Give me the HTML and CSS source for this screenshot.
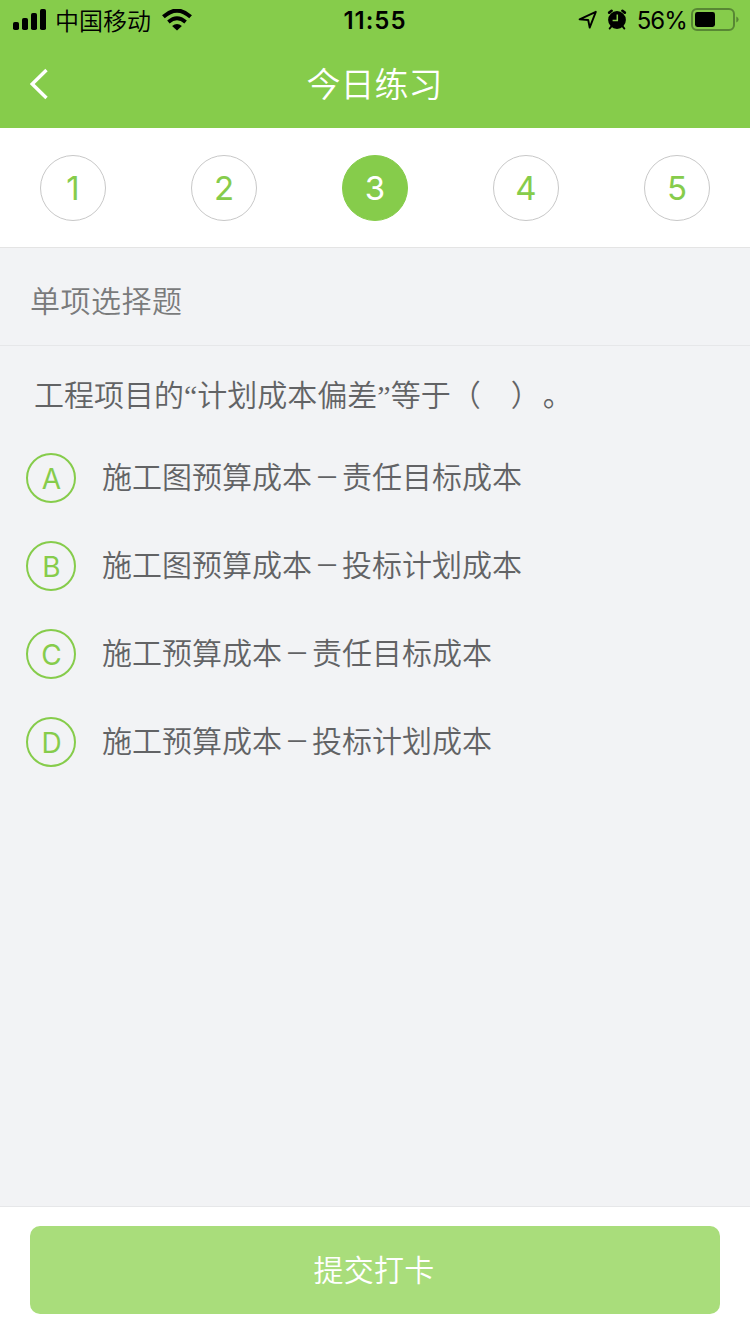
FILE: index.html
```html
<!DOCTYPE html>
<html lang="zh-CN">
<head>
<meta charset="utf-8">
<title>今日练习</title>
<link rel="stylesheet" href="styles.css">
</head>
<body>
<div class="app">
  <header class="header">
    <div class="status">
      <div class="status-left">
        <svg class="signal" width="34" height="22" viewBox="0 0 34 22">
          <rect x="0" y="13" width="6" height="8" rx="1.8"/>
          <rect x="9" y="9" width="6" height="12" rx="1.8"/>
          <rect x="18" y="4" width="6" height="17" rx="1.8"/>
          <rect x="27" y="0" width="6" height="21" rx="1.8"/>
        </svg>
        <span class="carrier">中国移动</span>
        <svg class="wifi" width="30" height="22" viewBox="0 0 30 22">
          <path d="M1.4 7.8Q15 -4.6 28.6 7.8" fill="none" stroke="#000" stroke-width="4"/>
          <path d="M6.4 13Q15 5.4 23.6 13" fill="none" stroke="#000" stroke-width="3.7"/>
          <path d="M10.1 17Q15 13 19.9 17L15 21.6Z"/>
        </svg>
      </div>
      <span class="time">11:55</span>
      <div class="status-right">
        <svg class="locate" width="20" height="20" viewBox="0 0 20 20">
          <path d="M1.6 9.4L17.8 1.8L11.7 17.6L10.2 10Z" fill="none" stroke="#000" stroke-width="1.9" stroke-linejoin="round"/>
        </svg>
        <svg class="alarm" width="20" height="22" viewBox="0 0 20 22">
          <circle cx="10" cy="11" r="8.9"/>
          <path d="M2.2 3.6L4.6 1.8M17.8 3.6L15.4 1.8" stroke="#000" stroke-width="2.6" stroke-linecap="round"/>
          <path d="M4.4 17.4L2.6 19.6M15.6 17.4L17.4 19.6" stroke="#000" stroke-width="1.8" stroke-linecap="round"/>
          <path d="M10.3 5.6V11.6H5.6" fill="none" stroke="#86cc4b" stroke-width="1.5"/>
        </svg>
        <span class="percent">56%</span>
        <svg class="battery" width="48" height="24" viewBox="0 0 48 24">
          <rect x="1" y="1" width="42" height="21" rx="5" fill="none" stroke="#588734" stroke-width="2"/>
          <rect x="4" y="4" width="20" height="15" rx="2.4"/>
          <path d="M45.3 8.5Q47.6 9.4 47.6 11.5T45.3 14.5Z" fill="#588734"/>
        </svg>
      </div>
    </div>
    <nav class="navbar">
      <svg class="back" width="20" height="32" viewBox="0 0 20 32">
        <path d="M16.5 2L2.2 16L16.5 30" fill="none" stroke="#fff" stroke-width="3.4"/>
      </svg>
      <h1 class="title">今日练习</h1>
    </nav>
  </header>
  <div class="steps">
    <span class="step">1</span>
    <span class="step">2</span>
    <span class="step step-active">3</span>
    <span class="step">4</span>
    <span class="step">5</span>
  </div>
  <div class="kind">单项选择题</div>
  <main class="quiz">
    <p class="question">工程项目的<span class="quote">“</span>计划成本偏差<span class="quote">”</span>等于（&#12288;<span class="paren">）</span>。</p>
    <ul class="options">
      <li class="option"><span class="letter">A</span><span>施工图预算成本<span class="minus">－</span>责任目标成本</span></li>
      <li class="option"><span class="letter">B</span><span>施工图预算成本<span class="minus">－</span>投标计划成本</span></li>
      <li class="option"><span class="letter">C</span><span>施工预算成本<span class="minus">－</span>责任目标成本</span></li>
      <li class="option"><span class="letter">D</span><span>施工预算成本<span class="minus">－</span>投标计划成本</span></li>
    </ul>
  </main>
  <footer class="footer">
    <button class="submit">提交打卡</button>
  </footer>
</div>
</body>
</html>
```
FILE: styles.css
```css
* { box-sizing: border-box; }
body {
  margin: 0;
  background: #f2f3f5;
  font-family: "Noto Sans CJK SC", "Noto Sans CJK SC DemiLight", sans-serif;
  font-weight: 350;
  text-spacing-trim: space-all;
}
.app {
  display: flex;
  flex-direction: column;
  width: 750px;
  height: 1334px;
  overflow: hidden;
}
.header {
  height: 128px;
  background: #86cc4b;
}
.status {
  display: grid;
  grid-template-columns: 1fr auto 1fr;
  align-items: center;
  height: 40px;
  padding: 0 11px 0 13px;
  color: #000;
  font-size: 24px;
  line-height: 40px;
}
.status-left, .status-right {
  display: flex;
  align-items: center;
}
.status-right { justify-content: flex-end; }
.signal { margin-bottom: 2px; }
.wifi { margin: 0 0 1px 11px; }
.carrier {
  height: 40px;
  margin-left: 8px;
  line-height: 38px;
}
.time {
  margin-right: 2px;
  font-family: Inter, sans-serif;
  font-size: 24px;
  font-weight: 600;
  letter-spacing: 1px;
}
.locate { margin-bottom: 1px; }
.alarm { margin: 0 0 1px 9px; }
.percent {
  margin: 1px 4px 0 10px;
  font-family: Inter, sans-serif;
  font-size: 24px;
  font-weight: 400;
  letter-spacing: -0.9px;
}
.battery { margin-bottom: 1px; }
.navbar {
  display: grid;
  grid-template-columns: 1fr auto 1fr;
  align-items: center;
  height: 88px;
  padding: 0 30px;
}
.title {
  height: 88px;
  margin: 0 1px 0 0;
  color: #fff;
  font-size: 34px;
  font-weight: 350;
  line-height: 86px;
}
.steps {
  display: flex;
  justify-content: space-between;
  height: 120px;
  padding: 27px 40px 0;
  background: #fff;
  border-bottom: 1px solid #e4e4e4;
}
.step {
  width: 66px;
  height: 66px;
  border: 1px solid #c8c8c8;
  border-radius: 50%;
  color: #86cc4b;
  font-family: Inter, sans-serif;
  font-size: 33px;
  font-weight: 400;
  line-height: 64px;
  text-align: center;
}
.step-active {
  border-color: #86cc4b;
  background: #86cc4b;
  color: #fff;
}
.kind {
  height: 98px;
  padding-left: 30px;
  border-bottom: 1px solid #e6e7e9;
  color: #7a7b7c;
  font-size: 30px;
  letter-spacing: 0.5px;
  line-height: 103px;
}
.quiz {
  flex: 1;
  color: #626365;
  font-size: 30px;
}
.question {
  margin: 0;
  padding: 24px 0 0 34px;
  line-height: 46px;
}
.quote {
  font-family: "Liberation Serif", serif;
  line-height: 1;
}
.paren { margin-right: 2px; }
.options {
  display: flex;
  flex-direction: column;
  gap: 38px;
  margin: 0;
  padding: 37px 0 0 26px;
  list-style: none;
}
.option {
  display: flex;
  align-items: flex-start;
  gap: 26px;
  height: 50px;
  line-height: 45px;
}
.minus {
  display: inline-block;
  transform: scaleX(0.82);
}
.letter {
  width: 50px;
  height: 50px;
  padding-left: 1px;
  border: 2px solid #86cc4b;
  border-radius: 50%;
  color: #86cc4b;
  font-family: Inter, sans-serif;
  font-size: 28px;
  font-weight: 400;
  line-height: 48px;
  text-align: center;
}
.footer {
  height: 128px;
  padding: 19px 30px 0;
  background: #fff;
  border-top: 1px solid #e6e7e9;
}
.submit {
  display: block;
  width: 690px;
  height: 88px;
  padding: 0 2px 3px 0;
  border: 0;
  border-radius: 10px;
  background: #a9dd7b;
  color: #fff;
  font-family: inherit;
  font-size: 30px;
  font-weight: 350;
  letter-spacing: 0.3px;
  line-height: 85px;
}
```
